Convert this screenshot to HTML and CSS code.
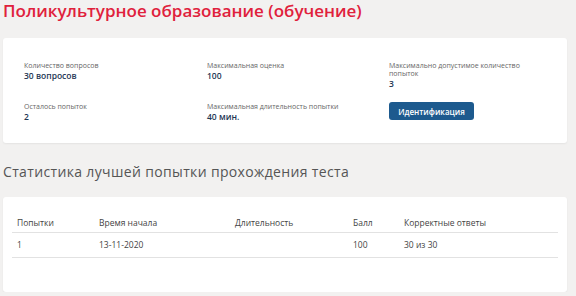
FILE: index.html
```html
<!DOCTYPE html>
<html lang="ru">
<head>
    <meta charset="UTF-8">
    <meta name="viewport" content="width=device-width, initial-scale=1.0">
    <title>Поликультурное образование (обучение)</title>
    <link rel="stylesheet" href="styles.css">
</head>
<body>
    <!-- Заголовок теста -->
    <h1 class="test-title">Поликультурное образование (обучение)</h1>

    <!-- Параметры теста -->
    <div class="card info-card">
        <div class="info-grid">
            <div class="info-item">
                <div class="info-label">Количество вопросов</div>
                <div class="info-value">30 вопросов</div>
            </div>
            <div class="info-item">
                <div class="info-label">Максимальная оценка</div>
                <div class="info-value">100</div>
            </div>
            <div class="info-item">
                <div class="info-label">Максимально допустимое количество попыток</div>
                <div class="info-value">3</div>
            </div>
            <div class="info-item">
                <div class="info-label">Осталось попыток</div>
                <div class="info-value">2</div>
            </div>
            <div class="info-item">
                <div class="info-label">Максимальная длительность попытки</div>
                <div class="info-value">40 мин.</div>
            </div>
            <div class="info-item">
                <button class="btn-primary" type="button">Идентификация</button>
            </div>
        </div>
    </div>

    <!-- Статистика -->
    <h2 class="section-title">Статистика лучшей попытки прохождения теста</h2>

    <div class="card stats-card">
        <table class="stats-table">
            <thead>
                <tr>
                    <th class="col-try">Попытки</th>
                    <th class="col-start">Время начала</th>
                    <th class="col-len">Длительность</th>
                    <th class="col-score">Балл</th>
                    <th>Корректные ответы</th>
                </tr>
            </thead>
            <tbody>
                <tr>
                    <td>1</td>
                    <td>13-11-2020</td>
                    <td></td>
                    <td>100</td>
                    <td>30 из 30</td>
                </tr>
            </tbody>
        </table>
    </div>
</body>
</html>
```

FILE: styles.css
```css
/* Base */
*, *::before, *::after {
    box-sizing: border-box;
    margin: 0;
    padding: 0;
}

body {
    font-family: "Open Sans", Arial, sans-serif;
    background-color: #f2f1f0;
    color: #444;
    padding: 0 9px 0 3px;
}

/* Titles */
.test-title {
    font-size: 17px;
    font-weight: 600;
    color: #e0213c;
    line-height: 22px;
}

.section-title {
    font-size: 14px;
    font-weight: 400;
    color: #555;
    line-height: 20px;
    margin: 19px 0 15px;
    letter-spacing: 0.35px;
}

/* Cards */
.card {
    background: #fff;
    border-radius: 3px;
    box-shadow: 0 1px 2px rgba(0,0,0,0.06);
}

.info-card {
    margin-top: 16px;
    padding: 24px 20px 21px 21px;
}

.info-grid {
    display: grid;
    grid-template-columns: 183px 182px 1fr;
    row-gap: 14px;
}

.info-label {
    font-size: 7px;
    line-height: 8px;
    color: #666;
    max-width: 135px;
}

.info-value {
    font-size: 8.5px;
    font-weight: 600;
    line-height: 11px;
    color: #1e3654;
}

.btn-primary {
    display: block;
    font-family: inherit;
    font-size: 8px;
    font-weight: 600;
    color: #fff;
    background-color: #1d5a8e;
    border: none;
    border-radius: 3px;
    width: 85px;
    height: 18px;
    margin-top: -1px;
}

/* Table */
.stats-card {
    padding: 17px 9px 34px;
}

.stats-table {
    width: 100%;
    border-collapse: collapse;
    font-size: 8.5px;
    color: #444;
}

.stats-table th {
    font-weight: 400;
    text-align: left;
    height: 18px;
    padding: 0 5px;
    border-bottom: 1px solid #e2e2e2;
}

.stats-table td {
    height: 25px;
    padding: 0 5px;
    border-bottom: 1px solid #e2e2e2;
}

.col-try { width: 82px; }
.col-start { width: 136px; }
.col-len { width: 118px; }
.col-score { width: 51px; }
```
